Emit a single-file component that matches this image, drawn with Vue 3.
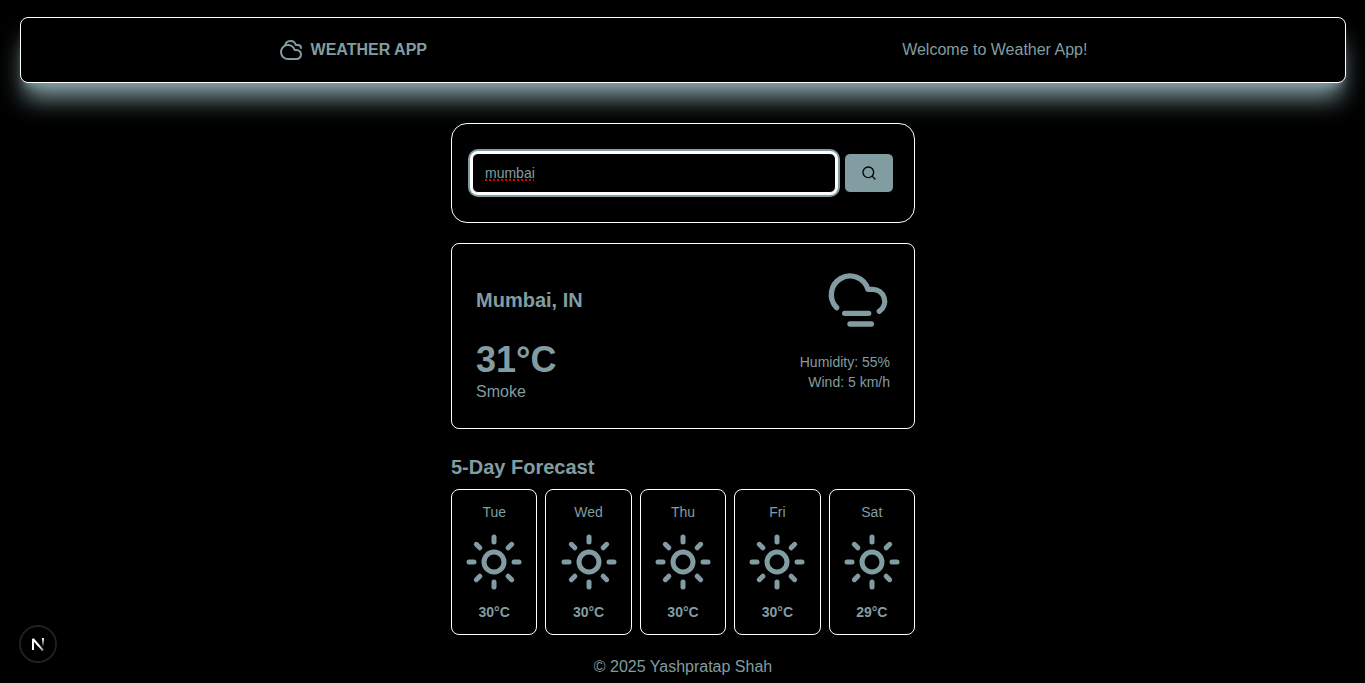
<script setup>
import { ref } from 'vue'

const city = ref('mumbai')
const forecast = [
  { day: 'Tue', temp: 30 },
  { day: 'Wed', temp: 30 },
  { day: 'Thu', temp: 30 },
  { day: 'Fri', temp: 30 },
  { day: 'Sat', temp: 29 },
]
</script>

<template>
  <div class="page">
    <header class="topbar">
      <div class="brand">
        <svg class="icon icon-brand" viewBox="0 0 24 24" aria-hidden="true">
          <path d="M17.5 21H9a7 7 0 1 1 6.71-9h1.79a4.5 4.5 0 1 1 0 9Z" />
          <path d="M22 10a3 3 0 0 0-3-3h-2.207a5.502 5.502 0 0 0-10.702.5" />
        </svg>
        <span>WEATHER APP</span>
      </div>
      <p class="welcome">Welcome to Weather App!</p>
    </header>

    <main class="content">
      <form class="search" @submit.prevent>
        <input v-model="city" class="search-input" type="text" aria-label="City" spellcheck="false" />
        <button class="search-button" type="submit" aria-label="Search">
          <svg class="icon icon-search" viewBox="0 0 24 24" aria-hidden="true">
            <circle cx="11" cy="11" r="8" />
            <path d="m21 21-4.3-4.3" />
          </svg>
        </button>
      </form>

      <section class="current">
        <div class="row">
          <h2 class="heading">Mumbai, IN</h2>
          <svg class="icon icon-current" viewBox="0 0 24 24" aria-hidden="true">
            <path d="M4 14.899A7 7 0 1 1 15.71 8h1.79a4.5 4.5 0 0 1 2.5 8.242" />
            <path d="M16 17H7" />
            <path d="M17 21H9" />
          </svg>
        </div>
        <div class="row">
          <div>
            <p class="temperature">31°C</p>
            <p>Smoke</p>
          </div>
          <div class="details">
            <p>Humidity: 55%</p>
            <p>Wind: 5 km/h</p>
          </div>
        </div>
      </section>

      <section class="forecast">
        <h2 class="heading">5-Day Forecast</h2>
        <ul class="days">
          <li v-for="item in forecast" :key="item.day" class="day">
            <span>{{ item.day }}</span>
            <svg class="icon icon-day" viewBox="0 0 24 24" aria-hidden="true">
              <circle cx="12" cy="12" r="4" />
              <path d="M12 2v2" />
              <path d="M12 20v2" />
              <path d="m4.93 4.93 1.41 1.41" />
              <path d="m17.66 17.66 1.41 1.41" />
              <path d="M2 12h2" />
              <path d="M20 12h2" />
              <path d="m6.34 17.66-1.41 1.41" />
              <path d="m19.07 4.93-1.41 1.41" />
            </svg>
            <strong>{{ item.temp }}°C</strong>
          </li>
        </ul>
      </section>
    </main>

    <footer class="footer">© 2025 Yashpratap Shah</footer>

    <button class="dev-badge" type="button" aria-label="Open Next.js Dev Tools">
      <svg class="dev-logo" viewBox="0 0 16 16" aria-hidden="true">
        <defs>
          <linearGradient id="diagonal" gradientUnits="userSpaceOnUse" x1="9" y1="9" x2="13" y2="15">
            <stop stop-color="#fff" />
            <stop offset="1" stop-color="#fff" stop-opacity="0.5" />
          </linearGradient>
          <linearGradient id="stem" gradientUnits="userSpaceOnUse" x1="12" y1="2" x2="12" y2="11">
            <stop stop-color="#fff" />
            <stop offset="1" stop-color="#fff" stop-opacity="0" />
          </linearGradient>
        </defs>
        <path d="M3 14V3L13 14.5" fill="none" stroke="url(#diagonal)" stroke-width="2" stroke-linejoin="bevel" />
        <path d="M13 2v9" fill="none" stroke="url(#stem)" stroke-width="2" />
      </svg>
    </button>
  </div>
</template>

<style>
body {
  background: #000;
}
</style>

<style scoped>
.page {
  --accent: #829da1;
  display: flow-root;
  padding-left: 1px;
  color: var(--accent);
  font: 16px/24px "Liberation Sans", Arial, sans-serif;
}

p,
h2,
ul {
  margin: 0;
  padding: 0;
}

.icon {
  display: block;
  flex: none;
  fill: none;
  stroke: currentColor;
  stroke-width: 2;
  stroke-linecap: round;
  stroke-linejoin: round;
}

.topbar {
  display: flex;
  align-items: center;
  justify-content: space-around;
  margin: 17px 19px 0;
  padding: 20px;
  border: 1px solid #fff;
  border-radius: 8px;
  background: #000;
  box-shadow:
    0 20px 25px -5px var(--accent),
    0 8px 10px -6px var(--accent);
}

.brand {
  display: flex;
  align-items: center;
  gap: 8px;
  font-weight: 700;
}

.icon-brand {
  width: 24px;
  height: 24px;
}

.content {
  display: flex;
  flex-direction: column;
  gap: 20px;
  max-width: 464px;
  margin: 40px auto 0;
}

.search {
  display: flex;
  gap: 8px;
  padding: 29px 20px;
  border: 1px solid #fff;
  border-radius: 16px;
}

.search-input {
  flex: 1;
  min-width: 0;
  box-sizing: border-box;
  height: 40px;
  padding: 8px 12px;
  border: 1px solid #fff;
  border-radius: 6px;
  outline: none;
  background: #000;
  color: var(--accent);
  font: 14px/20px "Liberation Sans", Arial, sans-serif;
  text-decoration: underline dotted #e00000 2px;
  text-underline-offset: 1px;
  text-decoration-skip-ink: none;
  box-shadow:
    0 0 0 2px #fff,
    0 0 0 4px var(--accent);
}

.search-button {
  display: flex;
  align-items: center;
  justify-content: center;
  width: 50px;
  height: 40px;
  padding: 0;
  border: 1px solid #000;
  border-radius: 6px;
  background: var(--accent);
  color: #000;
}

.icon-search {
  width: 16px;
  height: 16px;
}

.current {
  display: flex;
  flex-direction: column;
  gap: 8px;
  padding: 24px;
  border: 1px solid #fff;
  border-radius: 8px;
}

.row {
  display: flex;
  align-items: center;
  justify-content: space-between;
}

.heading {
  font-size: 20px;
  line-height: 28px;
}

.icon-current {
  width: 64px;
  height: 64px;
}

.temperature {
  font-size: 36px;
  line-height: 40px;
  font-weight: 700;
}

.details {
  font-size: 14px;
  line-height: 20px;
  text-align: right;
}

.forecast {
  display: flex;
  flex-direction: column;
  gap: 8px;
  padding-top: 4px;
}

.days {
  display: grid;
  grid-template-columns: repeat(5, 1fr);
  gap: 8px;
  list-style: none;
}

.day {
  display: flex;
  flex-direction: column;
  align-items: center;
  gap: 10px;
  padding: 12px;
  border: 1px solid #fff;
  border-radius: 8px;
  font-size: 14px;
  line-height: 20px;
}

.icon-day {
  width: 60px;
  height: 60px;
}

.footer {
  margin-top: 20px;
  text-align: center;
}

.dev-badge {
  position: fixed;
  left: 19px;
  bottom: 20px;
  display: flex;
  align-items: center;
  justify-content: center;
  width: 38px;
  height: 38px;
  padding: 0;
  border: 2px solid #1f1f1f;
  border-radius: 50%;
  background: #000;
}

.dev-logo {
  width: 16px;
  height: 16px;
}
</style>
